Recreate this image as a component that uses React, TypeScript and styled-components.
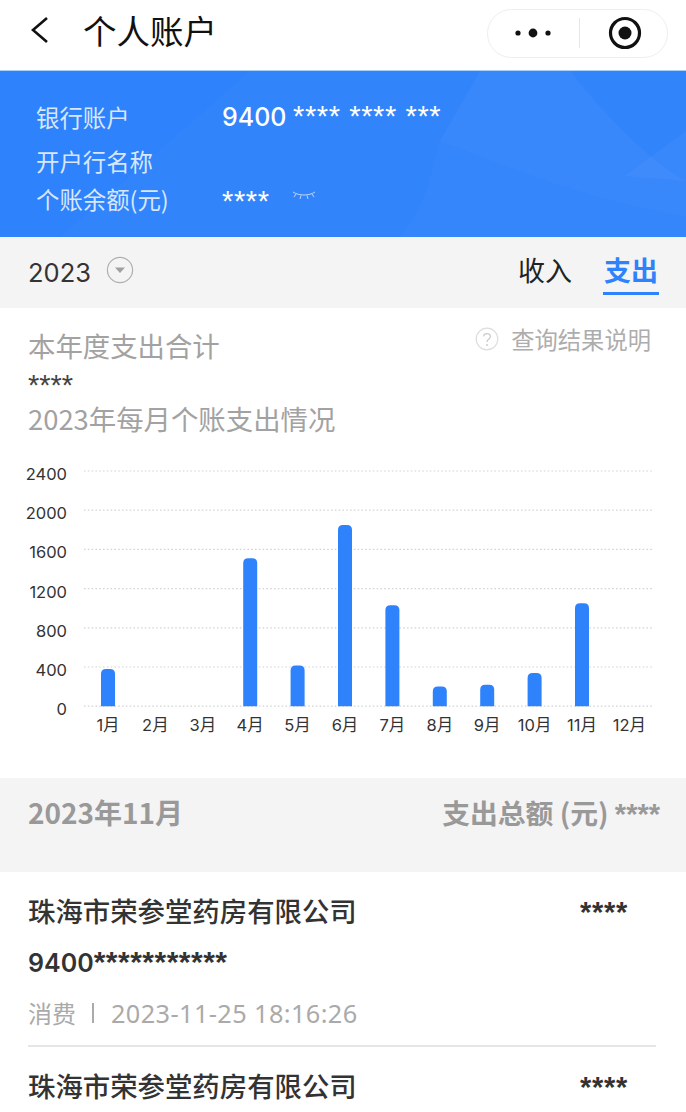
import { createGlobalStyle } from "styled-components";
import styled from "styled-components";

const GlobalStyle = createGlobalStyle`
  html, body {
    margin: 0;
    padding: 0;
    background: #fff;
  }
  body {
    font-family: "Noto Sans CJK SC", "Noto Sans", sans-serif;
  }
`;

const months = [
  { label: "1月", value: 380 },
  { label: "2月", value: 0 },
  { label: "3月", value: 0 },
  { label: "4月", value: 1510 },
  { label: "5月", value: 415 },
  { label: "6月", value: 1850 },
  { label: "7月", value: 1030 },
  { label: "8月", value: 200 },
  { label: "9月", value: 220 },
  { label: "10月", value: 340 },
  { label: "11月", value: 1050 },
  { label: "12月", value: 0 },
];

const ticks = [2400, 2000, 1600, 1200, 800, 400, 0];

const record = {
  name: "珠海市荣参堂药房有限公司",
  card: "9400",
  stars: "***********",
  kind: "消费",
  time: "2023-11-25 18:16:26",
};

export default function App() {
  return (
    <Page>
      <GlobalStyle />
      <NavBar>
        <BackTitle>
          <svg width="20" height="28" viewBox="0 0 20 28" fill="none">
            <path d="M17 2 L3 14 L17 26" stroke="#111" strokeWidth="2.6" />
          </svg>
          <NavTitle>个人账户</NavTitle>
        </BackTitle>
        <Capsule>
          <svg width="38" height="12" viewBox="0 0 38 12">
            <circle cx="4" cy="6" r="2.6" fill="#111" />
            <circle cx="19" cy="6" r="4.4" fill="#111" />
            <circle cx="34" cy="6" r="2.6" fill="#111" />
          </svg>
          <CapsuleDivider />
          <svg width="36" height="36" viewBox="0 0 36 36" fill="none">
            <circle cx="18" cy="18" r="14.5" stroke="#111" strokeWidth="3.2" />
            <circle cx="18" cy="18" r="6.5" fill="#111" />
          </svg>
        </Capsule>
      </NavBar>

      <Banner>
        <BannerArt viewBox="0 0 686 166" preserveAspectRatio="none">
          <path d="M60 166 L250 0 L686 0 L686 166 Z" fill="#fff" opacity="0.02" />
          <path d="M440 70 C520 100 590 130 686 145 L686 166 L400 166 C430 130 430 100 440 70 Z" fill="#fff" opacity="0.025" />
          <path d="M440 70 L480 0 L570 0 C610 50 650 90 686 110 L686 145 C590 130 520 100 440 70 Z" fill="#fff" opacity="0.035" />
          <path d="M625 105 L686 60 L686 110 Z" fill="#fff" opacity="0.03" />
        </BannerArt>
        <BannerRow>
          <BannerLabel>银行账户</BannerLabel>
          <CardNumber>9400 <Masked>**** **** ***</Masked></CardNumber>
        </BannerRow>
        <BannerRow>
          <BannerLabel>开户行名称</BannerLabel>
        </BannerRow>
        <BannerRow>
          <BannerLabel>个账余额(元)</BannerLabel>
          <BalanceValue>
            <Masked>****</Masked>
            <BalanceEye width="26" height="10" viewBox="0 0 26 10" fill="none" stroke="#bcd6fb" strokeWidth="1">
              <path d="M2 2 C8 6 18 6 24 2" />
              <path d="M5 4 L3 7 M10 5.5 L9 9 M16 5.5 L17 9 M21 4 L23 7" />
            </BalanceEye>
          </BalanceValue>
        </BannerRow>
      </Banner>

      <FilterBar>
        <YearPicker>
          <YearText>2023</YearText>
          <YearArrow width="28" height="28" viewBox="0 0 28 28" fill="none">
            <circle cx="14" cy="14" r="12.6" stroke="#b0b0b0" strokeWidth="1.2" />
            <path d="M9 11.5 H19 L14 17 Z" fill="#a0a0a0" />
          </YearArrow>
        </YearPicker>
        <Tabs>
          <Tab>收入</Tab>
          <Tab $active>支出</Tab>
        </Tabs>
      </FilterBar>

      <Summary>
        <SummaryHead>
          <SummaryTitle>本年度支出合计</SummaryTitle>
          <HelpLink>
            <svg width="24" height="24" viewBox="0 0 24 24" fill="none">
              <circle cx="12" cy="12" r="10.8" stroke="#ddd" strokeWidth="1.2" />
              <path d="M8.6 9.4 C8.8 5.6 15.4 5.6 15.4 9.4 C15.4 12 12 12 12 15" stroke="#ccc" strokeWidth="1.3" />
              <circle cx="12" cy="18" r="1" fill="#ccc" />
            </svg>
            查询结果说明
          </HelpLink>
        </SummaryHead>
        <SummaryAmount>****</SummaryAmount>
        <SummaryTitle>2023年每月个账支出情况</SummaryTitle>
      </Summary>

      <ChartBox>
        <svg width="686" height="290" viewBox="0 0 686 290">
          {ticks.map((t, i) => {
            const y = 21 + i * 39.2;
            return (
              <g key={t}>
                <line x1="84" x2="653" y1={y} y2={y} stroke="#d4d4d4" strokeWidth="1.2" strokeDasharray="1.6 2.2" />
                <ChartLabel x="67" y={y + 9} textAnchor="end">{t}</ChartLabel>
              </g>
            );
          })}
          {months.map((m, i) => {
            const x = 108 + i * 47.4;
            const h = (m.value / 2400) * 235.2;
            return (
              <g key={m.label}>
                {m.value > 0 && (
                  <path
                    d={`M${x - 7} 256.2 V${256.2 - h + 5} Q${x - 7} ${256.2 - h} ${x - 2} ${256.2 - h} H${x + 2} Q${x + 7} ${256.2 - h} ${x + 7} ${256.2 - h + 5} V256.2 Z`}
                    fill="#2e82fb"
                  />
                )}
                <ChartLabel x={x} y="281" textAnchor="middle">{m.label}</ChartLabel>
              </g>
            );
          })}
        </svg>
      </ChartBox>

      <MonthHeader>
        <MonthTitle>2023年11月</MonthTitle>
        <MonthTotal>支出总额 (元) <TotalStars>****</TotalStars></MonthTotal>
      </MonthHeader>

      <RecordList>
        <Record>
          <RecordTop>
            <RecordName>{record.name}</RecordName>
            <RecordAmount>****</RecordAmount>
          </RecordTop>
          <RecordCard>{record.card}<CardStars>{record.stars}</CardStars></RecordCard>
          <RecordMeta>
            <span>{record.kind}</span>
            <MetaBar />
            <MetaTime>{record.time}</MetaTime>
          </RecordMeta>
        </Record>
        <Record>
          <RecordTop>
            <RecordName>{record.name}</RecordName>
            <RecordAmount>****</RecordAmount>
          </RecordTop>
        </Record>
      </RecordList>
    </Page>
  );
}

const Page = styled.div`
  width: 686px;
  height: 1112px;
  overflow: hidden;
  background: #fff;
`;

const NavBar = styled.div`
  height: 70px;
  box-sizing: border-box;
  padding: 8px 18px 12px 30px;
  display: flex;
  align-items: center;
  justify-content: space-between;
`;

const BackTitle = styled.div`
  display: flex;
  align-items: center;
  gap: 33px;
  margin-top: -6px;
`;

const NavTitle = styled.div`
  font-size: 33.5px;
  line-height: 44px;
  color: #111;
`;

const Capsule = styled.div`
  width: 181px;
  height: 49px;
  box-sizing: border-box;
  border: 1px solid #eeeeee;
  border-radius: 25px;
  display: flex;
  align-items: center;
  padding: 0 24px 0 26px;
  justify-content: space-between;
`;

const CapsuleDivider = styled.div`
  width: 1px;
  height: 30px;
  background: #e6e6e6;
`;

const Banner = styled.div`
  position: relative;
  height: 167px;
  box-sizing: border-box;
  padding: 26px 36px 0;
  background: #2e82fb;
  border-top: 1px solid #a9d2fb;
  overflow: hidden;
  display: flex;
  flex-direction: column;
`;

const BannerArt = styled.svg`
  position: absolute;
  inset: 0;
  width: 100%;
  height: 100%;
`;

const BannerRow = styled.div`
  position: relative;
  display: flex;
  align-items: center;
  height: 40px;

  & + & {
    margin-top: 4px;
  }
  & + & + & {
    margin-top: -2px;
  }
`;

const BannerLabel = styled.div`
  width: 186px;
  font-size: 23.4px;
  line-height: 40px;
  color: #d8e7fd;
  flex-shrink: 0;
`;

const CardNumber = styled.div`
  font-family: "Inter", "Noto Sans", sans-serif;
  font-size: 25px;
  font-weight: 500;
  color: #fff;
  line-height: 40px;
  margin-top: -1px;
  white-space: pre;
`;

const Masked = styled.span`
  font-family: "Liberation Sans", sans-serif;
  font-size: 29px;
  font-weight: 400;
  line-height: 30px;
  letter-spacing: 0.6px;
`;

const BalanceValue = styled.div`
  display: flex;
  align-items: center;
  gap: 21px;
  color: #fff;
  margin-top: 3px;
`;

const BalanceEye = styled.svg`
  margin-top: -11px;
`;

const FilterBar = styled.div`
  height: 71px;
  box-sizing: border-box;
  background: #f4f4f4;
  padding: 0 27px 0 28px;
  display: flex;
  align-items: center;
  justify-content: space-between;
`;

const YearPicker = styled.div`
  display: flex;
  align-items: center;
  gap: 15px;
`;

const YearText = styled.div`
  font-family: "Inter", "Noto Sans", sans-serif;
  font-size: 25.5px;
  color: #333;
`;

const YearArrow = styled.svg`
  margin-top: -6px;
`;

const Tabs = styled.div`
  display: flex;
  align-items: center;
  gap: 30px;
`;

const Tab = styled.div<{ $active?: boolean }>`
  font-size: 27px;
  line-height: 38px;
  padding: 0 1px 3px;
  color: ${(p) => (p.$active ? "#2e82fb" : "#222")};
  font-weight: ${(p) => (p.$active ? 700 : 400)};
  border-bottom: 3px solid ${(p) => (p.$active ? "#2e82fb" : "transparent")};
`;

const Summary = styled.div`
  padding: 18px 35px 0 28px;
`;

const SummaryHead = styled.div`
  display: flex;
  justify-content: space-between;
  align-items: flex-start;
`;

const SummaryTitle = styled.div`
  font-size: 27.4px;
  line-height: 38px;
  color: #a2a2a2;
`;

const HelpLink = styled.div`
  display: flex;
  align-items: center;
  gap: 12px;
  font-size: 23.3px;
  line-height: 26px;
  color: #adadad;
`;

const SummaryAmount = styled.div`
  box-sizing: border-box;
  height: 35px;
  padding-top: 4px;
  font-family: "Liberation Sans", sans-serif;
  font-size: 29px;
  line-height: 35px;
  color: #444;
`;

const ChartBox = styled.div`
  height: 328px;
  margin-top: 13px;

  svg {
    display: block;
  }
`;

const ChartLabel = styled.text`
  font-family: "Inter", "Noto Sans CJK SC", sans-serif;
  font-size: 16.5px;
  fill: #333;
`;

const MonthHeader = styled.div`
  height: 94px;
  box-sizing: border-box;
  background: #f4f4f4;
  padding: 14px 26px 0 28px;
  display: flex;
  justify-content: space-between;
`;

const MonthTitle = styled.div`
  font-size: 28px;
  line-height: 40px;
  font-weight: 700;
  color: #999;
`;

const MonthTotal = styled.div`
  font-size: 27.8px;
  line-height: 40px;
  font-weight: 700;
  color: #999;
  white-space: pre;
`;

const TotalStars = styled.span`
  font-family: "Liberation Sans", sans-serif;
  font-size: 29px;
  line-height: 30px;
`;

const RecordList = styled.div`
  padding: 0 30px 0 28px;
`;

const Record = styled.div`
  height: 175px;
  box-sizing: border-box;
  padding-top: 20px;
  border-bottom: 2px solid #e6e6e6;

  & + & {
    border-bottom: none;
  }
`;

const RecordTop = styled.div`
  display: flex;
  justify-content: space-between;
  padding-right: 28px;
  height: 36px;
  align-items: center;
`;

const RecordName = styled.div`
  font-size: 27.4px;
  font-weight: 500;
  line-height: 36px;
  color: #333;
`;

const RecordAmount = styled.div`
  font-family: "Liberation Sans", sans-serif;
  font-size: 29px;
  font-weight: 700;
  line-height: 30px;
  letter-spacing: 0.7px;
  color: #333;
  margin-top: 3px;
`;

const RecordCard = styled.div`
  margin-top: 17px;
  font-family: "Inter", "Noto Sans", sans-serif;
  font-size: 25px;
  font-weight: 600;
  line-height: 36px;
  color: #333;
`;

const CardStars = styled.span`
  font-family: "Liberation Sans", sans-serif;
  font-size: 30px;
  font-weight: 700;
  line-height: 30px;
  letter-spacing: 0.5px;
`;

const RecordMeta = styled.div`
  margin-top: 14px;
  display: flex;
  align-items: center;
  font-size: 24px;
  line-height: 36px;
  color: #aaa;
`;

const MetaBar = styled.span`
  width: 2px;
  height: 20px;
  margin: 0 17px 0 16px;
  background: #aaa;
`;

const MetaTime = styled.span`
  font-family: "Noto Sans", sans-serif;
  font-size: 25.3px;
  letter-spacing: 0.4px;
`;
